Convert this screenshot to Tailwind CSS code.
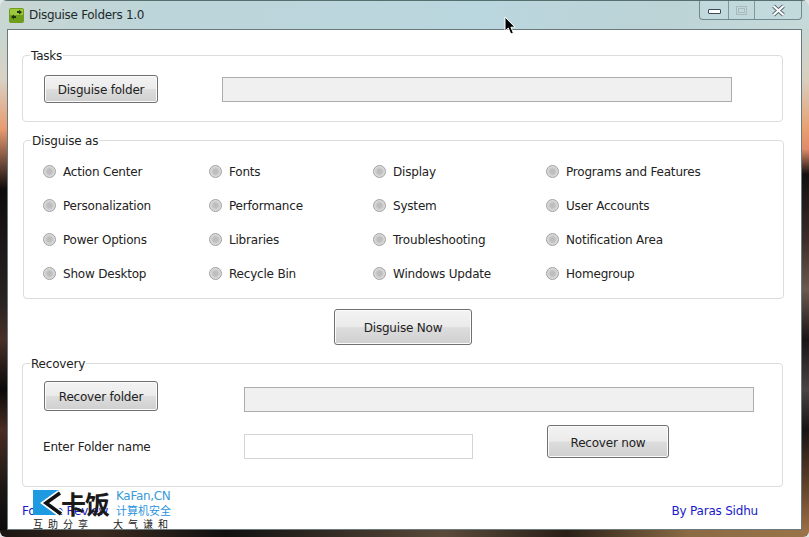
<!DOCTYPE html>
<html lang="en">
<head>
  <meta charset="UTF-8" />
  <title>Disguise Folders 1.0</title>
  <script src="https://cdn.jsdelivr.net/npm/@tailwindcss/browser@4"></script>
</head>
<body class="bg-[#dfe6e6] overflow-hidden">
  <div class="relative w-[809px] h-[537px] flex flex-col overflow-hidden rounded-t-[7px] font-['DejaVu_Sans',sans-serif] text-[12px] tracking-[-0.2px] text-[#222]">

    <!-- title bar -->
    <div class="h-[29px] shrink-0 flex items-start border-t border-[#56706f] bg-[linear-gradient(100deg,#c9d6d2_0%,#bcd5da_20%,#bad6de_60%,#bcd3d6_82%,#c6dada_100%)]">
      <svg class="ml-[9px] mt-[7px] shrink-0" width="15" height="15" viewBox="0 0 15 15">
        <rect width="15" height="15" rx="2" fill="#6f9e1c" />
        <rect x="1" y="1" width="13" height="6" rx="1" fill="#9cc83a" />
        <path d="M8 3h2V1.8L13 4.2 10 6.4V5H8z" fill="#1c3410" />
        <path d="M7 10H5v1.2L2 8.9 5 6.6V8h2z" fill="#1c3410" />
      </svg>
      <span class="ml-[5px] mt-[6px] leading-[16px] tracking-[-0.3px] text-[#1c2a2c]">Disguise Folders 1.0</span>
      <div class="ml-auto mr-[7px] flex h-[19px] w-[103px] border border-t-0 border-[#6f8a8e] rounded-b-[4px] bg-[#c2dade]/70">
        <div class="w-[29px] border-r border-[#7f989c] flex items-center justify-center">
          <div class="w-[13px] h-[5px] mt-[3px] bg-white border border-[#3c4a58] rounded-[1px]"></div>
        </div>
        <div class="w-[26px] border-r border-[#7f989c] flex items-center justify-center">
          <div class="w-[11px] h-[9px] border border-[#a8babe] flex items-center justify-center"><div class="w-[7px] h-[5px] border border-[#aabcc0]"></div></div>
        </div>
        <div class="flex-1 flex items-center justify-center">
          <svg width="15" height="13" viewBox="0 0 15 13">
            <path d="M2.5 2 12.5 11M12.5 2 2.5 11" stroke="#56666c" stroke-width="3.8" />
            <path d="M2.5 2 12.5 11M12.5 2 2.5 11" stroke="#fff" stroke-width="2" />
          </svg>
        </div>
      </div>
    </div>

    <div class="flex-1 flex min-h-0">
      <div class="w-[7px] shrink-0 bg-[linear-gradient(180deg,#c6d6d2_0%,#d8d2c4_10%,#e89a70_20%,#6a4638_27%,#0e0c0c_32%,#2a2422_55%,#4a3028_62%,#0a0a0a_72%,#4a2c22_80%,#1a1614_92%,#0c0c0c_100%)]"></div>

      <!-- client area -->
      <div class="flex-1 bg-white border border-[#6a7a7c] flex flex-col min-w-0">
        <fieldset class="ml-[14px] mt-[16px] w-[761px] h-[76px] border border-[#dcdcdc] rounded-[4px]">
          <legend class="ml-[7px] px-px pt-[2px] leading-[16px]">Tasks</legend>
          <div class="flex items-start pl-[21px] pt-[11px]">
            <button class="w-[114px] h-[28px] pt-[2px] shrink-0 border border-[#707070] rounded-[3px] shadow-[inset_0_0_0_1px_#fbfbfb] bg-[linear-gradient(180deg,#f3f3f3_0%,#ebebeb_48%,#dddddd_52%,#cfcfcf_100%)]">Disguise folder</button>
            <div class="ml-[64px] mt-[2px] w-[510px] h-[25px] bg-[#f0f0f0] border border-[#adadad]"></div>
          </div>
        </fieldset>

        <fieldset class="ml-[15px] mt-[9px] w-[761px] h-[168px] border border-[#dcdcdc] rounded-[4px]">
          <legend class="ml-[7px] px-px pt-[2px] leading-[16px]">Disguise as</legend>
          <div class="grid grid-cols-[166px_164px_173px_1fr] auto-rows-[34px] pl-[19px] pt-[6px]">
            <label class="flex items-center gap-[7px]"><span class="mb-[2px] w-[13px] h-[13px] rounded-full border border-[#a0a0a0] bg-[radial-gradient(circle,#bdbdbd_25%,#dedede_70%,#f6f6f6_100%)]"></span>Action Center</label>
            <label class="flex items-center gap-[7px]"><span class="mb-[2px] w-[13px] h-[13px] rounded-full border border-[#a0a0a0] bg-[radial-gradient(circle,#bdbdbd_25%,#dedede_70%,#f6f6f6_100%)]"></span>Fonts</label>
            <label class="flex items-center gap-[7px]"><span class="mb-[2px] w-[13px] h-[13px] rounded-full border border-[#a0a0a0] bg-[radial-gradient(circle,#bdbdbd_25%,#dedede_70%,#f6f6f6_100%)]"></span>Display</label>
            <label class="flex items-center gap-[7px]"><span class="mb-[2px] w-[13px] h-[13px] rounded-full border border-[#a0a0a0] bg-[radial-gradient(circle,#bdbdbd_25%,#dedede_70%,#f6f6f6_100%)]"></span>Programs and Features</label>
            <label class="flex items-center gap-[7px]"><span class="mb-[2px] w-[13px] h-[13px] rounded-full border border-[#a0a0a0] bg-[radial-gradient(circle,#bdbdbd_25%,#dedede_70%,#f6f6f6_100%)]"></span>Personalization</label>
            <label class="flex items-center gap-[7px]"><span class="mb-[2px] w-[13px] h-[13px] rounded-full border border-[#a0a0a0] bg-[radial-gradient(circle,#bdbdbd_25%,#dedede_70%,#f6f6f6_100%)]"></span>Performance</label>
            <label class="flex items-center gap-[7px]"><span class="mb-[2px] w-[13px] h-[13px] rounded-full border border-[#a0a0a0] bg-[radial-gradient(circle,#bdbdbd_25%,#dedede_70%,#f6f6f6_100%)]"></span>System</label>
            <label class="flex items-center gap-[7px]"><span class="mb-[2px] w-[13px] h-[13px] rounded-full border border-[#a0a0a0] bg-[radial-gradient(circle,#bdbdbd_25%,#dedede_70%,#f6f6f6_100%)]"></span>User Accounts</label>
            <label class="flex items-center gap-[7px]"><span class="mb-[2px] w-[13px] h-[13px] rounded-full border border-[#a0a0a0] bg-[radial-gradient(circle,#bdbdbd_25%,#dedede_70%,#f6f6f6_100%)]"></span>Power Options</label>
            <label class="flex items-center gap-[7px]"><span class="mb-[2px] w-[13px] h-[13px] rounded-full border border-[#a0a0a0] bg-[radial-gradient(circle,#bdbdbd_25%,#dedede_70%,#f6f6f6_100%)]"></span>Libraries</label>
            <label class="flex items-center gap-[7px]"><span class="mb-[2px] w-[13px] h-[13px] rounded-full border border-[#a0a0a0] bg-[radial-gradient(circle,#bdbdbd_25%,#dedede_70%,#f6f6f6_100%)]"></span>Troubleshooting</label>
            <label class="flex items-center gap-[7px]"><span class="mb-[2px] w-[13px] h-[13px] rounded-full border border-[#a0a0a0] bg-[radial-gradient(circle,#bdbdbd_25%,#dedede_70%,#f6f6f6_100%)]"></span>Notification Area</label>
            <label class="flex items-center gap-[7px]"><span class="mb-[2px] w-[13px] h-[13px] rounded-full border border-[#a0a0a0] bg-[radial-gradient(circle,#bdbdbd_25%,#dedede_70%,#f6f6f6_100%)]"></span>Show Desktop</label>
            <label class="flex items-center gap-[7px]"><span class="mb-[2px] w-[13px] h-[13px] rounded-full border border-[#a0a0a0] bg-[radial-gradient(circle,#bdbdbd_25%,#dedede_70%,#f6f6f6_100%)]"></span>Recycle Bin</label>
            <label class="flex items-center gap-[7px]"><span class="mb-[2px] w-[13px] h-[13px] rounded-full border border-[#a0a0a0] bg-[radial-gradient(circle,#bdbdbd_25%,#dedede_70%,#f6f6f6_100%)]"></span>Windows Update</label>
            <label class="flex items-center gap-[7px]"><span class="mb-[2px] w-[13px] h-[13px] rounded-full border border-[#a0a0a0] bg-[radial-gradient(circle,#bdbdbd_25%,#dedede_70%,#f6f6f6_100%)]"></span>Homegroup</label>
          </div>
        </fieldset>

        <button class="ml-[326px] mt-[10px] w-[138px] h-[36px] pt-[2px] shrink-0 border border-[#707070] rounded-[3px] shadow-[inset_0_0_0_1px_#fbfbfb] bg-[linear-gradient(180deg,#f3f3f3_0%,#ebebeb_48%,#dddddd_52%,#cfcfcf_100%)]">Disguise Now</button>

        <fieldset class="ml-[14px] mt-[9px] w-[761px] h-[133px] border border-[#dcdcdc] rounded-[4px]">
          <legend class="ml-[7px] px-px pt-[2px] leading-[16px]">Recovery</legend>
          <div class="flex items-start pl-[21px] pt-[9px]">
            <button class="w-[114px] h-[30px] pt-[2px] shrink-0 border border-[#707070] rounded-[3px] shadow-[inset_0_0_0_1px_#fbfbfb] bg-[linear-gradient(180deg,#f3f3f3_0%,#ebebeb_48%,#dddddd_52%,#cfcfcf_100%)]">Recover folder</button>
            <div class="ml-[86px] mt-[6px] w-[510px] h-[25px] bg-[#f0f0f0] border border-[#adadad]"></div>
          </div>
          <div class="flex items-start pl-[20px] mt-[13px]">
            <span class="w-[201px] mt-[14px] leading-[16px]">Enter Folder name</span>
            <input class="mt-[9px] w-[229px] h-[25px] bg-white border border-[#d5d5d5]" />
            <button class="ml-[74px] w-[122px] h-[33px] pt-[2px] shrink-0 border border-[#707070] rounded-[3px] shadow-[inset_0_0_0_1px_#fbfbfb] bg-[linear-gradient(180deg,#f3f3f3_0%,#ebebeb_48%,#dddddd_52%,#cfcfcf_100%)]">Recover now</button>
          </div>
        </fieldset>

        <div class="flex justify-between pl-[14px] pr-[43px] mt-[16px] leading-[16px] text-[#1a1ac8]">
          <span>For the Review</span>
          <span>By Paras Sidhu</span>
        </div>
      </div>

      <div class="w-[7px] shrink-0 bg-[linear-gradient(180deg,#c6d6d2_0%,#d8cfc0_10%,#e8a070_20%,#e08a68_24%,#141010_29%,#3a2c28_42%,#6a5a50_52%,#1a1416_62%,#4a4444_72%,#181414_80%,#5a3c28_90%,#9a6e44_100%)]"></div>
    </div>

    <!-- bottom edge -->
    <div class="h-[7px] shrink-0 rounded-b-[6px] bg-[linear-gradient(90deg,#1a1412_0%,#3a2a20_12%,#111_28%,#5a4a3a_55%,#2a2018_70%,#8a6a44_85%,#9a7448_100%)]"></div>

    <!-- watermark logo over the footer -->
    <div class="absolute left-[33px] top-[490px] w-[140px] h-[40px]">
      <svg class="absolute left-0 top-0" width="32" height="26" viewBox="0 0 32 26">
        <path d="M0 0H26L14 11 27 25H0z" fill="#1e9be0" />
        <path d="M27 3 13 13 28 24" fill="none" stroke="#fff" stroke-width="7" />
        <path d="M27 3 13 13 28 24" fill="none" stroke="#111" stroke-width="3.6" />
      </svg>
      <span class="absolute left-[28px] top-[-2px] font-['Noto_Sans_CJK_SC',sans-serif] font-bold text-[25px] leading-[30px] tracking-[-1px] text-[#1a1a1a]">卡饭</span>
      <span class="absolute left-[83px] top-[-1px] text-[12px] leading-[14px] tracking-[-0.3px] text-[#3a9ad8]">KaFan,CN</span>
      <span class="absolute left-[83px] top-[12px] font-['Noto_Sans_CJK_SC',sans-serif] text-[11px] leading-[16px] tracking-normal text-[#2a94dc]">计算机安全</span>
      <span class="absolute left-0 top-[27px] font-['Noto_Sans_CJK_SC',sans-serif] text-[10px] leading-[14px] tracking-[5px] text-[#222]">互助分享</span>
      <span class="absolute left-[80px] top-[27px] font-['Noto_Sans_CJK_SC',sans-serif] text-[10px] leading-[14px] tracking-[5px] text-[#222]">大气谦和</span>
    </div>

    <!-- mouse pointer -->
    <svg class="absolute left-[504px] top-[16px]" width="13" height="20" viewBox="0 0 13 20">
      <path d="M1 1V15L4.3 12 6.8 18 9.4 17 6.9 11.2H11z" fill="#000" stroke="#fff" stroke-width="1" />
    </svg>
  </div>
</body>
</html>
